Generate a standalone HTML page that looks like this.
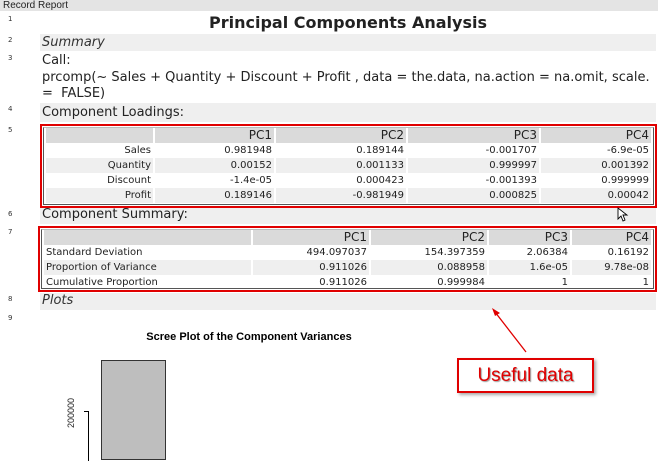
<!DOCTYPE html>
<html><head><style>
*{margin:0;padding:0;box-sizing:border-box}
body{width:658px;height:453px;background:#fff;font-family:"DejaVu Sans","Liberation Sans",sans-serif;position:relative;overflow:hidden;color:#222}
.a{position:absolute}
.num{position:absolute;left:8px;font-size:7px;color:#333}
.g{background:#efefef}
table{border-collapse:separate;border-spacing:2px 0;font-size:10px;width:100%}
td{text-align:right;padding:0 2px;height:15px;line-height:15px;white-space:nowrap;overflow:hidden}
tr.h td{background:#dadada;font-size:12px;height:15px}
tr.s td{background:#efefef}
</style></head><body>
<div class="a" style="left:0;top:0;width:658px;height:11px;background:#e4e4e4;font-family:'Liberation Sans',sans-serif;font-size:10px;line-height:11px;padding-left:3px">Record Report</div>
<div class="num" style="top:15px">1</div>
<div class="a" style="left:40px;top:12px;width:616px;height:21px;text-align:center;font-weight:bold;font-size:16px;line-height:21px">Principal Components Analysis</div>
<div class="num" style="top:36px">2</div>
<div class="a g" style="left:40px;top:34px;width:616px;height:17px;font-style:italic;font-size:13px;line-height:17px;padding-left:2px;color:#333">Summary</div>
<div class="num" style="top:54px">3</div>
<div class="a" style="left:42px;top:53px;width:614px;font-size:13px;line-height:16.5px;color:#222">Call:<br>prcomp(~ Sales + Quantity + Discount + Profit , data = the.data, na.action = na.omit, scale.<br>= &nbsp;FALSE)</div>
<div class="num" style="top:105px">4</div>
<div class="a g" style="left:40px;top:103px;width:616px;height:19px;font-size:13px;line-height:19px;padding-left:2px">Component Loadings:</div>
<div class="num" style="top:126px">5</div>
<div class="a" style="left:40px;top:124px;width:617px;height:84px;border:2px solid #e00000;padding:1px">
<div style="border:1px solid #555;border-top:1px solid #bbb;height:78px">
<table style="table-layout:fixed"><colgroup><col style="width:107px"><col style="width:119px"><col style="width:130px"><col style="width:131px"><col></colgroup>
<tr class="h"><td></td><td>PC1</td><td>PC2</td><td>PC3</td><td>PC4</td></tr>
<tr><td>Sales</td><td>0.981948</td><td>0.189144</td><td>-0.001707</td><td>-6.9e-05</td></tr>
<tr class="s"><td>Quantity</td><td>0.00152</td><td>0.001133</td><td>0.999997</td><td>0.001392</td></tr>
<tr><td>Discount</td><td>-1.4e-05</td><td>0.000423</td><td>-0.001393</td><td>0.999999</td></tr>
<tr class="s"><td>Profit</td><td>0.189146</td><td>-0.981949</td><td>0.000825</td><td>0.00042</td></tr>
</table></div></div>
<div class="num" style="top:210px">6</div>
<div class="a g" style="left:40px;top:208px;width:616px;height:16px;font-size:13px;line-height:14px;padding-left:2px">Component Summary:</div>
<div class="num" style="top:228px">7</div>
<div class="a" style="left:38px;top:226px;width:619px;height:66px;border:2px solid #e00000;padding:1px">
<div style="border:1px solid #555;border-top:1px solid #bbb;height:60px">
<table style="table-layout:fixed"><colgroup><col style="width:207px"><col style="width:116px"><col style="width:116px"><col style="width:81px"><col></colgroup>
<tr class="h"><td></td><td>PC1</td><td>PC2</td><td>PC3</td><td>PC4</td></tr>
<tr><td style="text-align:left">Standard Deviation</td><td>494.097037</td><td>154.397359</td><td>2.06384</td><td>0.16192</td></tr>
<tr class="s"><td style="text-align:left">Proportion of Variance</td><td>0.911026</td><td>0.088958</td><td>1.6e-05</td><td>9.78e-08</td></tr>
<tr><td style="text-align:left">Cumulative Proportion</td><td>0.911026</td><td>0.999984</td><td>1</td><td>1</td></tr>
</table></div></div>
<div class="num" style="top:295px">8</div>
<div class="a g" style="left:40px;top:293px;width:616px;height:17px;font-style:italic;font-size:13px;line-height:15px;padding-left:2px;color:#333">Plots</div>
<div class="num" style="top:314px">9</div>
<div class="a" style="left:99px;top:331px;width:300px;text-align:center;font-family:'Liberation Sans',sans-serif;font-weight:bold;font-size:11px;color:#000">Scree Plot of the Component Variances</div>
<div class="a" style="left:101px;top:360px;width:65px;height:100px;background:#bebebe;border:1px solid #333"></div>
<div class="a" style="left:88px;top:411px;width:1px;height:50px;background:#000"></div>
<div class="a" style="left:84px;top:411px;width:5px;height:1px;background:#000"></div>
<div class="a" style="left:51px;top:408px;width:40px;font-family:'Liberation Sans',sans-serif;font-size:9px;transform:rotate(-90deg);transform-origin:center;text-align:center">200000</div>
<svg class="a" style="left:480px;top:300px" width="60" height="60"><line x1="46" y1="52" x2="15" y2="12" stroke="#e00000" stroke-width="1.3"/><polygon points="12,8 20,13 15,16" fill="#e00000"/></svg>
<div class="a" style="left:457px;top:358px;width:137px;height:35px;border:2px solid #e00000;background:#fff;box-shadow:2px 2px 3px #aaa;text-align:center;font-family:'Liberation Sans',sans-serif;font-size:19px;line-height:31px;color:#e00000;text-shadow:1px 1px 1px #999">Useful data</div>
<svg class="a" style="left:617px;top:207px" width="12" height="16"><path d="M1 1 L1 12 L4 9 L6 14 L8 13 L6 8 L10 8 Z" fill="#fff" stroke="#000" stroke-width="0.9"/></svg>
</body></html>
